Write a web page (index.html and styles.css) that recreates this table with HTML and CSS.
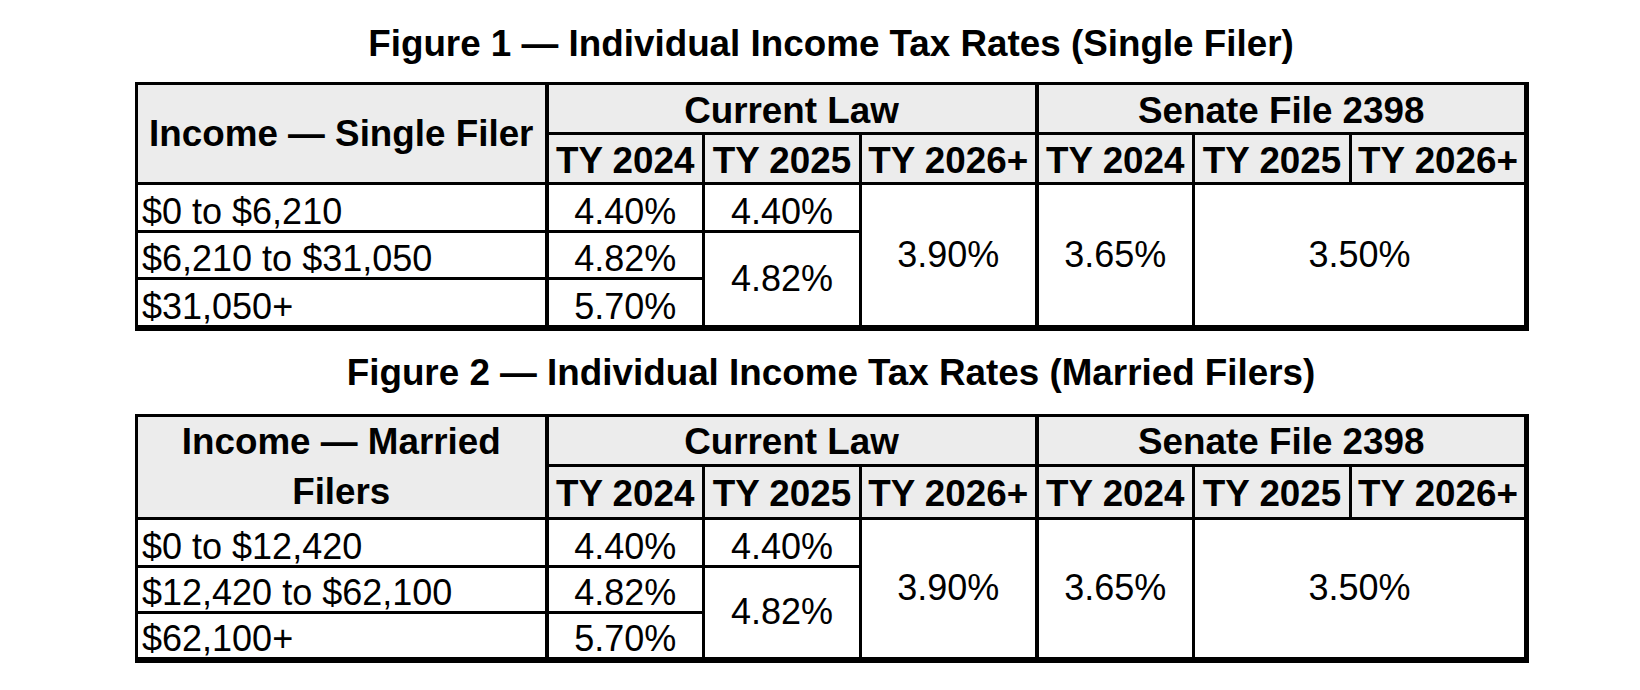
FILE: index.html
```html
<!DOCTYPE html>
<html lang="en">
<head>
<meta charset="utf-8">
<title>Individual Income Tax Rates</title>
<link rel="stylesheet" href="styles.css">
</head>
<body>
<div class="page">
  <section class="figure">
    <h2 class="fig-title">Figure 1 — Individual Income Tax Rates (Single Filer)</h2>
    <table class="rates">
      <colgroup>
        <col class="c-inc"><col class="c-yr"><col class="c-yr"><col class="c-yr-w"><col class="c-yr"><col class="c-yr"><col class="c-yr-w">
      </colgroup>
      <thead>
        <tr class="h1">
          <th rowspan="2" class="inc-h">Income — Single Filer</th>
          <th colspan="3" class="grp sep">Current Law</th>
          <th colspan="3" class="grp">Senate File 2398</th>
        </tr>
        <tr class="h2">
          <th>TY 2024</th><th>TY 2025</th><th class="sep">TY 2026+</th>
          <th>TY 2024</th><th>TY 2025</th><th>TY 2026+</th>
        </tr>
      </thead>
      <tbody>
        <tr class="r1">
          <td class="inc">$0 to $6,210</td><td>4.40%</td><td>4.40%</td>
          <td rowspan="3" class="mid sep">3.90%</td>
          <td rowspan="3" class="mid">3.65%</td>
          <td rowspan="3" colspan="2" class="mid">3.50%</td>
        </tr>
        <tr class="r2">
          <td class="inc">$6,210 to $31,050</td><td>4.82%</td>
          <td rowspan="2" class="mid">4.82%</td>
        </tr>
        <tr class="r3">
          <td class="inc">$31,050+</td><td>5.70%</td>
        </tr>
      </tbody>
    </table>
  </section>

  <section class="figure fig2">
    <h2 class="fig-title">Figure 2 — Individual Income Tax Rates (Married Filers)</h2>
    <table class="rates">
      <colgroup>
        <col class="c-inc"><col class="c-yr"><col class="c-yr"><col class="c-yr-w"><col class="c-yr"><col class="c-yr"><col class="c-yr-w">
      </colgroup>
      <thead>
        <tr class="h1">
          <th rowspan="2" class="inc-h wrap">Income — Married Filers</th>
          <th colspan="3" class="grp sep">Current Law</th>
          <th colspan="3" class="grp">Senate File 2398</th>
        </tr>
        <tr class="h2">
          <th>TY 2024</th><th>TY 2025</th><th class="sep">TY 2026+</th>
          <th>TY 2024</th><th>TY 2025</th><th>TY 2026+</th>
        </tr>
      </thead>
      <tbody>
        <tr class="r1">
          <td class="inc">$0 to $12,420</td><td>4.40%</td><td>4.40%</td>
          <td rowspan="3" class="mid sep">3.90%</td>
          <td rowspan="3" class="mid">3.65%</td>
          <td rowspan="3" colspan="2" class="mid">3.50%</td>
        </tr>
        <tr class="r2">
          <td class="inc">$12,420 to $62,100</td><td>4.82%</td>
          <td rowspan="2" class="mid">4.82%</td>
        </tr>
        <tr class="r3">
          <td class="inc">$62,100+</td><td>5.70%</td>
        </tr>
      </tbody>
    </table>
  </section>
</div>
</body>
</html>
```

FILE: styles.css
```css
html, body {
  margin: 0;
  padding: 0;
  background: #ffffff;
}

body {
  font-family: "Liberation Sans", Arial, sans-serif;
  color: #000000;
  width: 1640px;
  height: 690px;
  overflow: hidden;
}

.page {
  padding-top: 23px;
  margin-left: 135px;
  width: 1392px;
}

.fig-title {
  margin: 0 0 17px 0;
  font-size: 36.8px;
  line-height: 42px;
  font-weight: bold;
  text-align: center;
  white-space: nowrap;
}

.fig2 {
  margin-top: 21px;
}

.fig2 .fig-title {
  margin-bottom: 20px;
}

.rates {
  border-collapse: collapse;
  table-layout: fixed;
  width: 1392px;
  border-top: 3px solid #000;
  border-left: 3px solid #000;
  border-right: 5px solid #000;
  border-bottom: 6px solid #000;
}

.c-inc { width: 410px; }
.c-yr { width: 157px; }
.c-yr-w { width: 176px; }

.rates th,
.rates td {
  border: 3px solid #000;
  padding: 0;
  white-space: nowrap;
  overflow: visible;
}

.rates th {
  background: #ececec;
  font-size: 36.8px;
  font-weight: bold;
  line-height: 42px;
  text-align: center;
  vertical-align: middle;
  padding-top: 4px;
}

.rates th.inc-h {
  padding-top: 0;
  border-right-width: 4px;
}

.rates th.wrap {
  white-space: normal;
  line-height: 50px;
}

.rates .sep {
  border-right-width: 4px;
}

.rates td {
  font-size: 36px;
  line-height: 37px;
  text-align: center;
  vertical-align: bottom;
}

.rates td.inc {
  text-align: left;
  padding-left: 4px;
  border-right-width: 4px;
}

.rates td.mid {
  vertical-align: middle;
  line-height: 42px;
}

.h1 { height: 50px; }
.h2 { height: 50px; }
.r1 { height: 48px; }
.r2 { height: 47px; }
.r3 { height: 49px; }

.fig2 .h1 { height: 49px; }
.fig2 .r1 { height: 48px; }
.fig2 .r2 { height: 46px; }
.fig2 .r3 { height: 48px; }
```
